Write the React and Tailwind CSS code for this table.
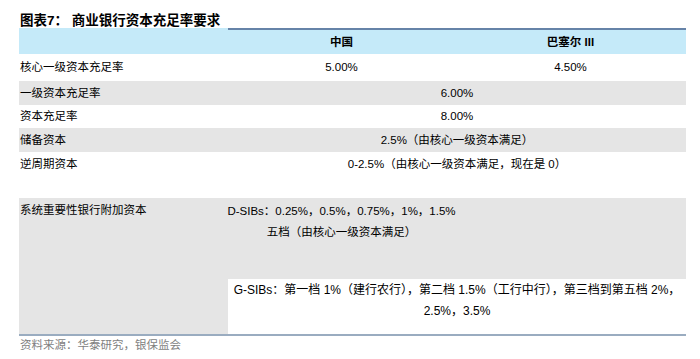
const rows = [
  { label: "一级资本充足率", value: "6.00%", gray: true, h: "h-[24px]" },
  { label: "资本充足率", value: "8.00%", gray: false, h: "h-[23px]" },
  { label: "储备资本", value: "2.5%（由核心一级资本满足）", gray: true, h: "h-[24px]" },
  { label: "逆周期资本", value: "0-2.5%（由核心一级资本满足，现在是 0）", gray: false, h: "h-[24px]" },
];

export default function App() {
  return (
    <div className="w-[700px] h-[359px] bg-white text-black font-['Liberation_Sans','Noto_Sans_CJK_SC',sans-serif]">
      <div className="h-[28px] pl-[20px] pt-[12px] text-[13.5px] leading-[18px] font-bold">
        图表7： 商业银行资本充足率要求
      </div>

      <div className="ml-[19px] w-[667px] text-[11.5px] leading-[21px]">
        <div className="flex h-[2px] bg-[#c5eaf9]">
          <div className="w-[209px]" />
          <div className="flex-1 bg-[#6683a8]" />
        </div>

        <div className="grid grid-cols-[209px_227px_231px] h-[24px] items-center bg-[#c5eaf9] font-bold">
          <div />
          <div className="text-center">中国</div>
          <div className="text-center">巴塞尔 III</div>
        </div>

        <div className="grid grid-cols-[209px_227px_231px] h-[27px] items-center">
          <div className="pl-[1px]">核心一级资本充足率</div>
          <div className="text-center">5.00%</div>
          <div className="text-center">4.50%</div>
        </div>

        {rows.map((r) => (
          <div
            key={r.label}
            className={`grid grid-cols-[209px_458px] items-center ${r.h} ${r.gray ? "bg-[#e5e5e5]" : ""}`}
          >
            <div className="pl-[1px]">{r.label}</div>
            <div className="text-center whitespace-nowrap">{r.value}</div>
          </div>
        ))}

        <div className="h-[22px]" />

        <div className="grid grid-cols-[209px_458px] h-[136px]">
          <div className="bg-[#e5e5e5] pl-[1px] pt-[2px]">系统重要性银行附加资本</div>
          <div className="flex flex-col">
            <div className="h-[81px] bg-[#e5e5e5] pt-[3px]">
              <div className="w-[227px] flex flex-col items-center">
                <div className="whitespace-nowrap">D-SIBs：0.25%，0.5%，0.75%，1%，1.5%</div>
                <div className="whitespace-nowrap">五档（由核心一级资本满足）</div>
              </div>
            </div>
            <div className="flex-1 pt-[1px] flex flex-col items-center text-[12px]">
              <div className="whitespace-nowrap">
                G-SIBs：第一档 1%（建行农行），第二档 1.5%（工行中行），第三档到第五档 2%，
              </div>
              <div className="whitespace-nowrap">2.5%，3.5%</div>
            </div>
          </div>
        </div>

        <div className="h-[2px] bg-[#9aacc0]" />
      </div>

      <div className="pl-[20px] pt-[2px] text-[11.5px] leading-[14px] text-[#7f7f7f]">
        资料来源：华泰研究，银保监会
      </div>
    </div>
  );
}
